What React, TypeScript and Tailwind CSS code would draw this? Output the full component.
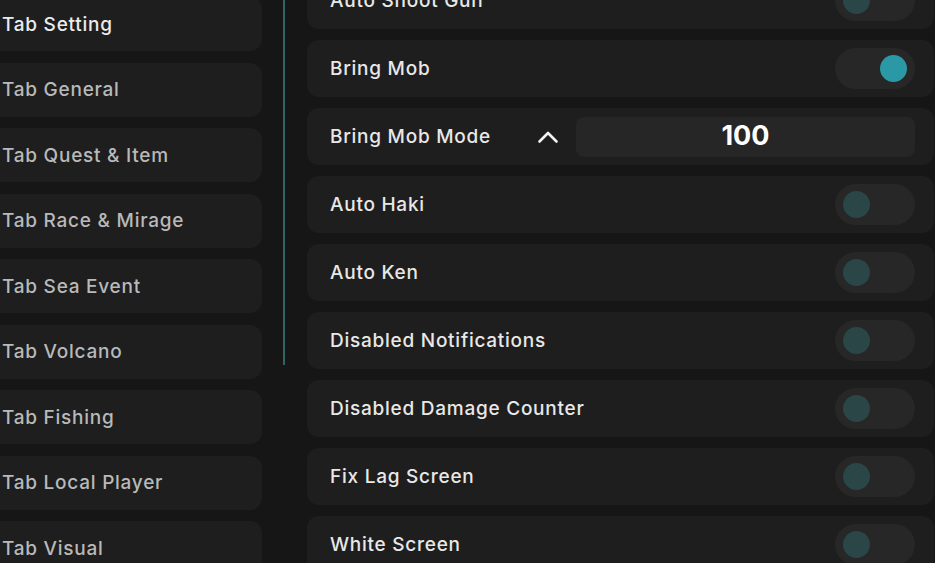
import React from "react";

const tabs = [
  "Tab Setting",
  "Tab General",
  "Tab Quest & Item",
  "Tab Race & Mirage",
  "Tab Sea Event",
  "Tab Volcano",
  "Tab Fishing",
  "Tab Local Player",
  "Tab Visual",
];

type Row =
  | { kind: "toggle"; label: string; on: boolean }
  | { kind: "number"; label: string; value: string };

const rows: Row[] = [
  { kind: "toggle", label: "Auto Shoot Gun", on: false },
  { kind: "toggle", label: "Bring Mob", on: true },
  { kind: "number", label: "Bring Mob Mode", value: "100" },
  { kind: "toggle", label: "Auto Haki", on: false },
  { kind: "toggle", label: "Auto Ken", on: false },
  { kind: "toggle", label: "Disabled Notifications", on: false },
  { kind: "toggle", label: "Disabled Damage Counter", on: false },
  { kind: "toggle", label: "Fix Lag Screen", on: false },
  { kind: "toggle", label: "White Screen", on: false },
];

function Toggle({ on }: { on: boolean }) {
  return (
    <div
      className={`flex h-[41px] w-[80px] shrink-0 items-center rounded-full bg-[#272727] px-[8px] ${
        on ? "justify-end" : "justify-start"
      }`}
    >
      <div
        className={`h-[27px] w-[27px] rounded-full ${
          on ? "bg-[#2b98a6]" : "bg-[#2a4647]"
        }`}
      />
    </div>
  );
}

function ChevronUp() {
  return (
    <svg width="22" height="14" viewBox="0 0 22 14" fill="none" className="shrink-0">
      <path
        d="M2.5 11.5 L11 3 L19.5 11.5"
        stroke="#f2f2f2"
        strokeWidth="2.6"
        strokeLinecap="round"
        strokeLinejoin="round"
      />
    </svg>
  );
}

export default function App() {
  return (
    <div
      className="flex h-[563px] w-[935px] overflow-hidden bg-[#161616] text-[19px] font-medium tracking-[0.75px]"
      style={{ fontFamily: "Inter, 'Noto Sans', sans-serif" }}
    >
      {/* tab list */}
      <div className="ml-[-12px] mt-[-3px] flex w-[274px] shrink-0 flex-col gap-[11.5px]">
        {tabs.map((t, i) => (
          <div
            key={t}
            className={`flex h-[54px] shrink-0 items-center rounded-[12px] bg-[#1e1e1e] pl-[14px] pt-[2px] ${
              i === 0 ? "text-[#ececec]" : "text-[#b9b9b9]"
            }`}
          >
            {t}
          </div>
        ))}
      </div>

      {/* divider */}
      <div className="ml-[21px] h-[365px] w-[2px] shrink-0 bg-[#2e6466]" />

      {/* options */}
      <div className="ml-[22px] mt-[-28px] flex w-[627px] shrink-0 flex-col gap-[11px]">
        {rows.map((r) => (
          <div
            key={r.label}
            className="flex h-[57px] shrink-0 items-center rounded-[12px] bg-[#1e1e1e] pl-[23px] pr-[19px] text-[#e8e8e8]"
          >
            {r.kind === "toggle" ? (
              <>
                <span className="flex-1 whitespace-nowrap pt-[2px]">{r.label}</span>
                <Toggle on={r.on} />
              </>
            ) : (
              <>
                <span className="w-[207px] shrink-0 whitespace-nowrap pt-[2px]">{r.label}</span>
                <ChevronUp />
                <div className="ml-[17px] flex h-[40px] flex-1 items-center justify-center rounded-[8px] bg-[#262626] text-[27px] font-bold tracking-normal text-white">
                  {r.value}
                </div>
              </>
            )}
          </div>
        ))}
      </div>
    </div>
  );
}
